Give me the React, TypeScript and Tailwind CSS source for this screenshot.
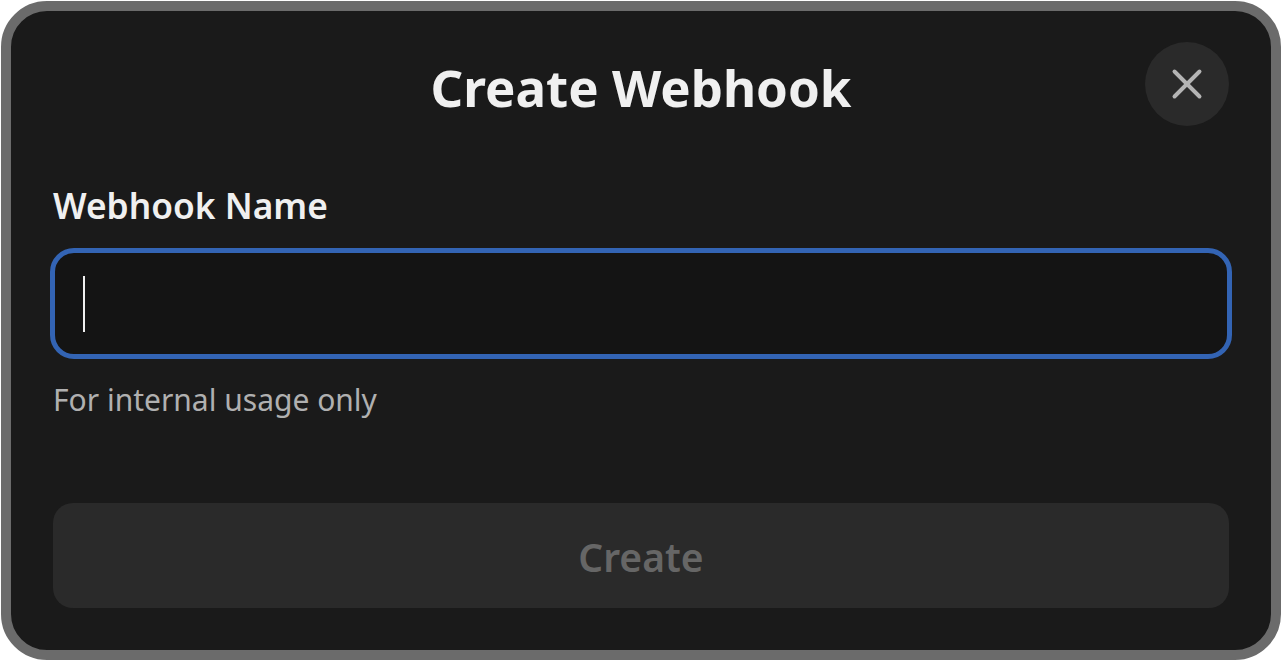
import { X } from 'lucide-react'

// Create webhook dialog, blown up to fill the window
export default function App() {
  return (
    <div className="h-[661px] w-[1282px] bg-white p-px font-['Noto_Sans',sans-serif]">
      <div className="relative flex h-full w-full flex-col rounded-[46px] border-[10px] border-[#6b6b6b] bg-[#1a1a1a] px-[42px] pt-[42px]">
        <h1 className="text-center text-[51px] leading-[68px] font-bold text-[#f0f0f0]">Create Webhook</h1>
        <button className="absolute top-[31px] right-[42px] flex h-[84px] w-[84px] items-center justify-center rounded-full bg-[#2a2a2a] text-[#b4b4b4]">
          <X size={50} strokeWidth={1.9} />
        </button>

        <label className="mt-[61px] text-[35.3px] leading-[46px] font-semibold text-[#f0f0f0]">Webhook Name</label>
        <div className="mt-[20px] -mx-[3px] flex h-[111px] items-center rounded-[24px] border-[5px] border-[#3364b4] bg-[#141414] pl-[28px]">
          <div className="h-[56px] w-[2px] bg-[#f0f0f0]" />
        </div>
        <p className="mt-[20px] text-[30px] leading-[42px] text-[#b0b0b0]">For internal usage only</p>

        <button className="mt-[82px] h-[105px] rounded-[20px] bg-[#2a2a2a] pt-[3px] text-[39px] font-semibold text-[#666666]">Create</button>
      </div>
    </div>
  )
}
